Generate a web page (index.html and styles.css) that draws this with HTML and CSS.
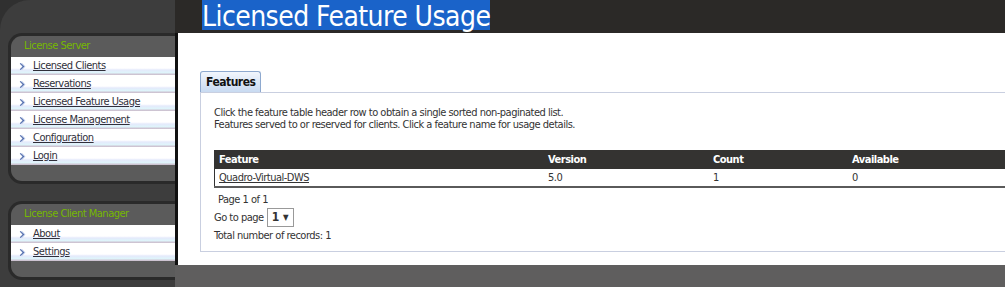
FILE: index.html
```html
<!DOCTYPE html>
<html lang="en">
<head>
  <meta charset="UTF-8">
  <title>Licensed Feature Usage</title>
  <link rel="stylesheet" href="styles.css">
</head>
<body>
  <div class="page">
    <!-- Left navigation -->
    <aside class="sidebar">
      <div class="menu-block">
        <div class="menu-title">License Server</div>
        <ul class="menu">
          <li><span class="chev"></span><a href="#">Licensed Clients</a></li>
          <li><span class="chev"></span><a href="#">Reservations</a></li>
          <li><span class="chev"></span><a href="#">Licensed Feature Usage</a></li>
          <li><span class="chev"></span><a href="#">License Management</a></li>
          <li><span class="chev"></span><a href="#">Configuration</a></li>
          <li><span class="chev"></span><a href="#">Login</a></li>
        </ul>
        <div class="menu-foot"></div>
      </div>
      <div class="menu-block">
        <div class="menu-title">License Client Manager</div>
        <ul class="menu">
          <li><span class="chev"></span><a href="#">About</a></li>
          <li><span class="chev"></span><a href="#">Settings</a></li>
        </ul>
        <div class="menu-foot"></div>
      </div>
    </aside>

    <div class="main">
      <header class="title-bar">
        <h1><span class="selected">Licensed Feature Usage</span></h1>
      </header>

      <div class="content">
        <div class="tab">Features</div>
        <div class="panel">
          <p class="note">Click the feature table header row to obtain a single sorted non-paginated list.<br>
          Features served to or reserved for clients. Click a feature name for usage details.</p>

          <table class="grid">
            <thead>
              <tr>
                <th class="c-feature">Feature</th>
                <th class="c-version">Version</th>
                <th class="c-count">Count</th>
                <th class="c-avail">Available</th>
              </tr>
            </thead>
            <tbody>
              <tr>
                <td><a href="#">Quadro-Virtual-DWS</a></td>
                <td>5.0</td>
                <td>1</td>
                <td>0</td>
              </tr>
            </tbody>
          </table>

          <div class="pager-info">Page 1 of 1</div>
          <div class="goto">Go to page <span class="select">1 <span class="arrow">&#9660;</span></span></div>
          <div class="total">Total number of records: 1</div>
        </div>
      </div>

      <div class="footer-bar"></div>
    </div>
  </div>
</body>
</html>
```

FILE: styles.css
```css
:root {
  --nv-green: #76b900;
  --dark: #2b2927;
  --side: #3d3d3d;
  --block-head: #5b5b5b;
  --text: #333;
}

html, body {
  margin: 0;
  padding: 0;
  height: 100%;
  overflow: hidden;
}

body {
  background-color: #303030;
  font-family: "DejaVu Sans Condensed", "Liberation Sans", sans-serif;
  font-size: 11px;
  letter-spacing: -0.5px;
  color: var(--text);
}

.page {
  display: flex;
  height: 287px;
}

/* sidebar */

.sidebar {
  width: 167px;
  flex: none;
  background-color: var(--side);
  border-top-left-radius: 30px;
  padding: 33px 0 0 8px;
}

.menu-block {
  border: 3px solid #2a2a2a;
  border-right: none;
  border-radius: 14px 0 0 14px;
  background-color: var(--block-head);
  margin-bottom: 17px;
  overflow: hidden;
}

.menu-title {
  height: 21px;
  line-height: 20px;
  padding-left: 13px;
  color: var(--nv-green);
  font-size: 11px;
}

.menu {
  list-style: none;
  margin: 0;
  padding: 0;
}

.menu li {
  height: 18px;
  line-height: 16px;
  padding-left: 7px;
  display: flex;
  align-items: center;
  background: linear-gradient(to bottom, #fff 0%, #fff 62%, #e4e9fb 72%, #dff4fb 86%, #c9b8c8 100%);
}

.menu a {
  color: #2f2f3a;
  text-decoration: underline;
}

.chev {
  width: 4px;
  height: 4px;
  border-top: 1px solid #4a66a8;
  border-right: 1px solid #4a66a8;
  box-shadow: 1px -1px 0 #b7c6e6;
  transform: rotate(45deg);
  margin-right: 10px;
}

.menu-foot {
  height: 16px;
}

/* main column */

.main {
  flex: 1;
  display: flex;
  flex-direction: column;
  min-width: 0;
  overflow: hidden;
}

.title-bar {
  height: 33px;
  background-color: var(--dark);
  padding-left: 27px;
}

.title-bar h1 {
  margin: 0;
  height: 33px;
  font-weight: normal;
  font-size: 28px;
  letter-spacing: -0.55px;
  line-height: 33px;
  color: #fff;
}

.selected {
  display: inline-block;
  vertical-align: top;
  height: 30px;
  background-color: #1a63c9;
}

.content {
  height: 194px;
  background-color: #fff;
  border-left: 3px solid #111;
  padding: 38px 0 0 22px;
}

.tab {
  display: inline-block;
  height: 20px;
  line-height: 20px;
  padding: 0 5px;
  font-weight: bold;
  font-size: 12px;
  color: #111;
  border: 1px solid #8ea9cf;
  border-bottom: none;
  border-radius: 3px 3px 0 0;
  background: linear-gradient(to bottom, #f2f6fd, #c8daf1);
}

.panel {
  border: 1px solid #c9cfe0;
  border-right: none;
  width: 900px;
  height: 160px;
  padding: 14px 0 0 13px;
  box-sizing: border-box;
}

.note {
  margin: 0 0 19px 0;
  line-height: 12px;
}

.grid {
  border-collapse: collapse;
  width: 830px;
  border-left: 1px solid #333;
  border-bottom: 2px solid #5a5a5a;
}

.grid th {
  background-color: #343331;
  color: #fff;
  text-align: left;
  height: 19px;
  padding: 0 4px;
}

.grid td {
  height: 17px;
  padding: 0 4px;
}

.grid td a {
  color: #333;
}

.c-feature { width: 321px; }
.c-version { width: 157px; }
.c-count { width: 131px; }

.pager-info {
  margin: 5px 0 0 4px;
  height: 12px;
}

.goto {
  margin-top: 3px;
  display: flex;
  align-items: center;
  gap: 3px;
}

.select {
  display: inline-block;
  border: 1px solid #999;
  height: 17px;
  line-height: 17px;
  padding: 0 4px;
  font-size: 12px;
  font-weight: bold;
  letter-spacing: 0;
}

.arrow {
  font-size: 8px;
  vertical-align: top;
}

.total {
  margin-top: 2px;
}

.footer-bar {
  flex: 1;
  background-color: #5f5e5e;
  border-left: 3px solid #5f5e5e;
}
```
